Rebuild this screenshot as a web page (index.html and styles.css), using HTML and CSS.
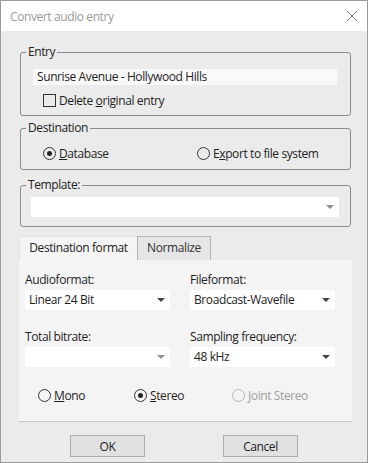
FILE: index.html
```html
<!DOCTYPE html>
<html lang="en">
<head>
    <meta charset="UTF-8">
    <title>Convert audio entry</title>
    <link rel="stylesheet" href="styles.css">
</head>
<body>
    <div class="window">
        <div class="titlebar">
            <span class="title">Convert audio entry</span>
            <svg class="close" width="12" height="12" viewBox="0 0 12 12">
                <path d="M1 1 L11 11 M11 1 L1 11" stroke="#777" stroke-width="1" fill="none"/>
            </svg>
        </div>

        <div class="content">
            <fieldset class="group group-entry">
                <legend>Entry</legend>
                <div class="group-body">
                    <div class="textfield">Sunrise Avenue - Hollywood Hills</div>
                    <label class="check">
                        <span class="checkbox"></span><span>Delete <u>o</u>riginal entry</span>
                    </label>
                </div>
            </fieldset>

            <fieldset class="group group-dest">
                <legend>Destination</legend>
                <div class="group-body dest-options">
                    <label class="option"><span class="radio checked"></span><span><u>D</u>atabase</span></label>
                    <label class="option"><span class="radio"></span><span>E<u>x</u>port to file system</span></label>
                </div>
            </fieldset>

            <fieldset class="group group-template">
                <legend>Template:</legend>
                <div class="group-body">
                    <div class="combo combo-empty"><span class="arrow"></span></div>
                </div>
            </fieldset>

            <div class="tabs">
                <div class="tab active">Destination format</div>
                <div class="tab">Normalize</div>
            </div>
            <div class="tab-panel">
                <div class="format-grid">
                    <div class="field">
                        <div class="field-label">Audioformat:</div>
                        <div class="combo">Linear 24 Bit<span class="arrow"></span></div>
                    </div>
                    <div class="field">
                        <div class="field-label">Fileformat:</div>
                        <div class="combo">Broadcast-Wavefile<span class="arrow"></span></div>
                    </div>
                    <div class="field">
                        <div class="field-label">Total bitrate:</div>
                        <div class="combo combo-empty"><span class="arrow"></span></div>
                    </div>
                    <div class="field">
                        <div class="field-label">Sampling frequency:</div>
                        <div class="combo">48 kHz<span class="arrow"></span></div>
                    </div>
                </div>
                <div class="channel-options">
                    <label class="option"><span class="radio"></span><span><u>M</u>ono</span></label>
                    <label class="option"><span class="radio checked"></span><span><u>S</u>tereo</span></label>
                    <label class="option disabled"><span class="radio"></span><span><u>J</u>oint Stereo</span></label>
                </div>
            </div>

            <div class="buttons">
                <button class="btn">OK</button>
                <button class="btn">Cancel</button>
            </div>
        </div>
    </div>
</body>
</html>
```

FILE: styles.css
```css
body {
    margin: 0;
    padding: 0;
    font-family: 'Open Sans', 'Noto Sans', sans-serif;
    font-size: 12px;
    letter-spacing: -0.4px;
    color: #1e1e1e;
}

.window {
    width: 368px;
    height: 463px;
    box-sizing: border-box;
    border: 1px solid #9a9a9a;
    background-color: #ebebeb;
    overflow: hidden;
}

.titlebar {
    height: 30px;
    background-color: #fff;
    display: flex;
    align-items: center;
    justify-content: space-between;
    padding: 0 9px 0 9px;
}

.title {
    color: #9a9a9a;
    font-size: 12px;
}

.close {
    display: block;
    margin-top: -1px;
}

.content {
    padding-top: 13px;
}

/* group boxes */
.group {
    margin: 0 16px 0 19px;
    padding: 0;
    border: 1px solid #8c8c8c;
    border-radius: 3px;
    min-width: 0;
}

.group legend {
    margin-left: 5px;
    padding: 0 2px;
    line-height: 16px;
    color: #222;
}

.group-entry .group-body {
    padding: 9px 13px 7px 12px;
}

.group-dest {
    margin-top: 4px;
}

.group-dest .group-body {
    padding: 9px 0 8px 22px;
}

.group-template {
    margin-top: 7px;
}

.group-template .group-body {
    padding: 4px 11px 9px 10px;
}

.textfield {
    height: 16px;
    line-height: 16px;
    padding-left: 4px;
    background-color: #f9f9f9;
    white-space: nowrap;
}

.check {
    display: flex;
    align-items: center;
    height: 16px;
    margin-top: 7px;
    padding-left: 10px;
}

.checkbox {
    width: 11px;
    height: 11px;
    border: 1px solid #333;
    margin-right: 3px;
}

/* radios */
.option {
    display: flex;
    align-items: center;
    height: 16px;
    white-space: nowrap;
}

.radio {
    width: 11px;
    height: 11px;
    border: 1px solid #333;
    border-radius: 50%;
    margin-right: 3px;
    position: relative;
}

.radio.checked::after {
    content: "";
    position: absolute;
    left: 3px;
    top: 3px;
    width: 5px;
    height: 5px;
    border-radius: 50%;
    background-color: #222;
}

.option.disabled {
    color: #a0a0a0;
}

.option.disabled .radio {
    border-color: #b8b8b8;
}

.dest-options {
    display: grid;
    grid-template-columns: 154px auto;
}

/* combos */
.combo {
    height: 20px;
    line-height: 20px;
    padding-left: 4px;
    background-color: #fff;
    position: relative;
    white-space: nowrap;
}

.arrow {
    position: absolute;
    right: 5px;
    top: 8px;
    width: 0;
    height: 0;
    border-left: 4px solid transparent;
    border-right: 4px solid transparent;
    border-top: 4px solid #444;
}

.combo-empty .arrow {
    border-top-color: #909090;
}

/* tabs */
.tabs {
    display: flex;
    margin: 9px 0 0 18px;
    height: 24px;
}

.tab {
    box-sizing: border-box;
    height: 24px;
    line-height: 22px;
    text-align: center;
    border: 1px solid #b4b4b4;
    border-bottom: none;
    background-color: #e6e6e6;
    color: #333;
    width: 74px;
}

.tab.active {
    width: 118px;
    background-color: #f4f4f4;
    border-color: #e2e2e2;
    border-right: none;
    color: #222;
}

.tab-panel {
    margin: 0 15px 0 18px;
    padding: 12px 0 18px 6px;
    background-color: #f4f4f4;
    border-bottom: 1px solid #c8c8c8;
}

.format-grid {
    display: grid;
    grid-template-columns: 145px 145px;
    column-gap: 20px;
    row-gap: 19px;
}

.field-label {
    line-height: 16px;
    margin-bottom: 2px;
}

.channel-options {
    display: grid;
    grid-template-columns: 96px 98px auto;
    margin-top: 20px;
    padding-left: 13px;
}

/* buttons */
.buttons {
    display: flex;
    margin-top: 13px;
    padding-left: 69px;
    gap: 78px;
}

.btn {
    width: 75px;
    height: 22px;
    background-color: #e1e1e1;
    border: 1px solid #adadad;
    font-family: inherit;
    font-size: 12px;
    letter-spacing: inherit;
    color: #222;
    padding: 0;
}
```
